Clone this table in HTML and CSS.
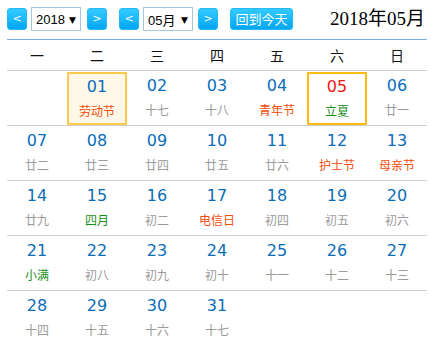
FILE: index.html
```html
<!DOCTYPE html>
<html lang="zh">
<head>
<meta charset="utf-8">
<link rel="stylesheet" href="styles.css">
</head>
<body>
<div class="cal">
  <div class="toolbar">
    <button class="nav">&lt;</button>
    <div class="sel year">2018<span class="arrow">▼</span></div>
    <button class="nav gap6">&gt;</button>
    <button class="nav gap12">&lt;</button>
    <div class="sel month">05月<span class="arrow">▼</span></div>
    <button class="nav gap5">&gt;</button>
    <button class="today">回到今天</button>
    <div class="title">2018年05月</div>
  </div>
  <div class="weekdays">
    <span>一</span><span>二</span><span>三</span><span>四</span><span>五</span><span>六</span><span>日</span>
  </div>
  <div class="row">
    <div class="cell empty"></div>
    <div class="cell sel-day"><b>01</b><i class="fest">劳动节</i></div>
    <div class="cell"><b>02</b><i>十七</i></div>
    <div class="cell"><b>03</b><i>十八</i></div>
    <div class="cell"><b>04</b><i class="fest">青年节</i></div>
    <div class="cell today-day"><b class="red">05</b><i class="term">立夏</i></div>
    <div class="cell"><b>06</b><i>廿一</i></div>
  </div>
  <div class="row">
    <div class="cell"><b>07</b><i>廿二</i></div>
    <div class="cell"><b>08</b><i>廿三</i></div>
    <div class="cell"><b>09</b><i>廿四</i></div>
    <div class="cell"><b>10</b><i>廿五</i></div>
    <div class="cell"><b>11</b><i>廿六</i></div>
    <div class="cell"><b>12</b><i class="fest">护士节</i></div>
    <div class="cell"><b>13</b><i class="fest">母亲节</i></div>
  </div>
  <div class="row">
    <div class="cell"><b>14</b><i>廿九</i></div>
    <div class="cell"><b>15</b><i class="term">四月</i></div>
    <div class="cell"><b>16</b><i>初二</i></div>
    <div class="cell"><b>17</b><i class="fest">电信日</i></div>
    <div class="cell"><b>18</b><i>初四</i></div>
    <div class="cell"><b>19</b><i>初五</i></div>
    <div class="cell"><b>20</b><i>初六</i></div>
  </div>
  <div class="row">
    <div class="cell"><b>21</b><i class="term">小满</i></div>
    <div class="cell"><b>22</b><i>初八</i></div>
    <div class="cell"><b>23</b><i>初九</i></div>
    <div class="cell"><b>24</b><i>初十</i></div>
    <div class="cell"><b>25</b><i>十一</i></div>
    <div class="cell"><b>26</b><i>十二</i></div>
    <div class="cell"><b>27</b><i>十三</i></div>
  </div>
  <div class="row last">
    <div class="cell"><b>28</b><i>十四</i></div>
    <div class="cell"><b>29</b><i>十五</i></div>
    <div class="cell"><b>30</b><i>十六</i></div>
    <div class="cell"><b>31</b><i>十七</i></div>
  </div>
</div>
</body>
</html>
```
FILE: styles.css
```css
* { box-sizing: border-box; }
body {
  margin: 0;
  background: #fff;
  font-family: "Noto Sans CJK SC", "DejaVu Sans", sans-serif;
}
.cal {
  width: 420px;
  margin-left: 7px;
}
.toolbar {
  display: flex;
  align-items: center;
  height: 40px;
  padding-bottom: 1px;
  border-bottom: 1px solid #79aee8;
}
.nav {
  width: 20px;
  height: 22px;
  padding: 0;
  border: 1px solid #27b8f5;
  border-radius: 3px;
  background: linear-gradient(#33caff, #04a6f2);
  color: #fff;
  font-family: "DejaVu Sans", sans-serif;
  font-size: 11px;
  line-height: 20px;
  text-align: center;
}
.gap6 { margin-left: 6px; }
.gap12 { margin-left: 12px; }
.gap5 { margin-left: 5px; }
.sel {
  display: flex;
  align-items: center;
  justify-content: space-between;
  width: 50px;
  height: 24px;
  margin-left: 4px;
  padding: 0 4px 0 4px;
  border: 1px solid #a5c6df;
  background: #fff;
  color: #000;
  font-family: "Liberation Sans", "Noto Sans CJK SC", sans-serif;
  font-size: 13px;
}
.arrow {
  font-family: "DejaVu Sans", sans-serif;
  font-size: 9px;
  margin-top: 1px;
}
.today {
  margin-left: 12px;
  width: 63px;
  height: 22px;
  padding: 0;
  border: 1px solid #27b8f5;
  border-radius: 3px;
  background: linear-gradient(#33caff, #04a6f2);
  color: #fff;
  font-family: "Noto Sans CJK SC", sans-serif;
  font-size: 13px;
  line-height: 20px;
}
.title {
  margin-left: auto;
  margin-right: 2px;
  font-family: "Liberation Serif", "Noto Sans CJK SC", serif;
  font-size: 19px;
  color: #000;
  line-height: 22px;
}
.weekdays {
  display: grid;
  grid-template-columns: repeat(7, 60px);
  height: 31px;
  border-bottom: 1px solid #cfcfcf;
}
.weekdays span {
  text-align: center;
  font-size: 14px;
  line-height: 30px;
  color: #111;
}
.row {
  display: grid;
  grid-template-columns: repeat(7, 60px);
  height: 55px;
  border-bottom: 1px solid #cfcfcf;
}
.row.last { border-bottom: none; }
.cell {
  display: flex;
  flex-direction: column;
  align-items: center;
  padding-top: 6px;
}
.cell b {
  font-family: "DejaVu Sans", sans-serif;
  font-weight: normal;
  font-size: 16px;
  line-height: 18px;
  color: #0b6db8;
}
.cell b.red { color: #f21818; }
.cell i {
  font-style: normal;
  font-size: 12px;
  line-height: 16px;
  margin-top: 7px;
  color: #9a9a9a;
}
.cell i.fest { color: #f44c0a; }
.cell i.term { color: #1a8f1a; }
.sel-day {
  margin-top: 1px;
  height: 53px;
  padding-top: 4px;
  border: 2px solid #fcc94c;
  background: #fff8e8;
}
.today-day {
  margin-top: 1px;
  height: 53px;
  padding-top: 4px;
  border: 2px solid #fbbb10;
}
```
